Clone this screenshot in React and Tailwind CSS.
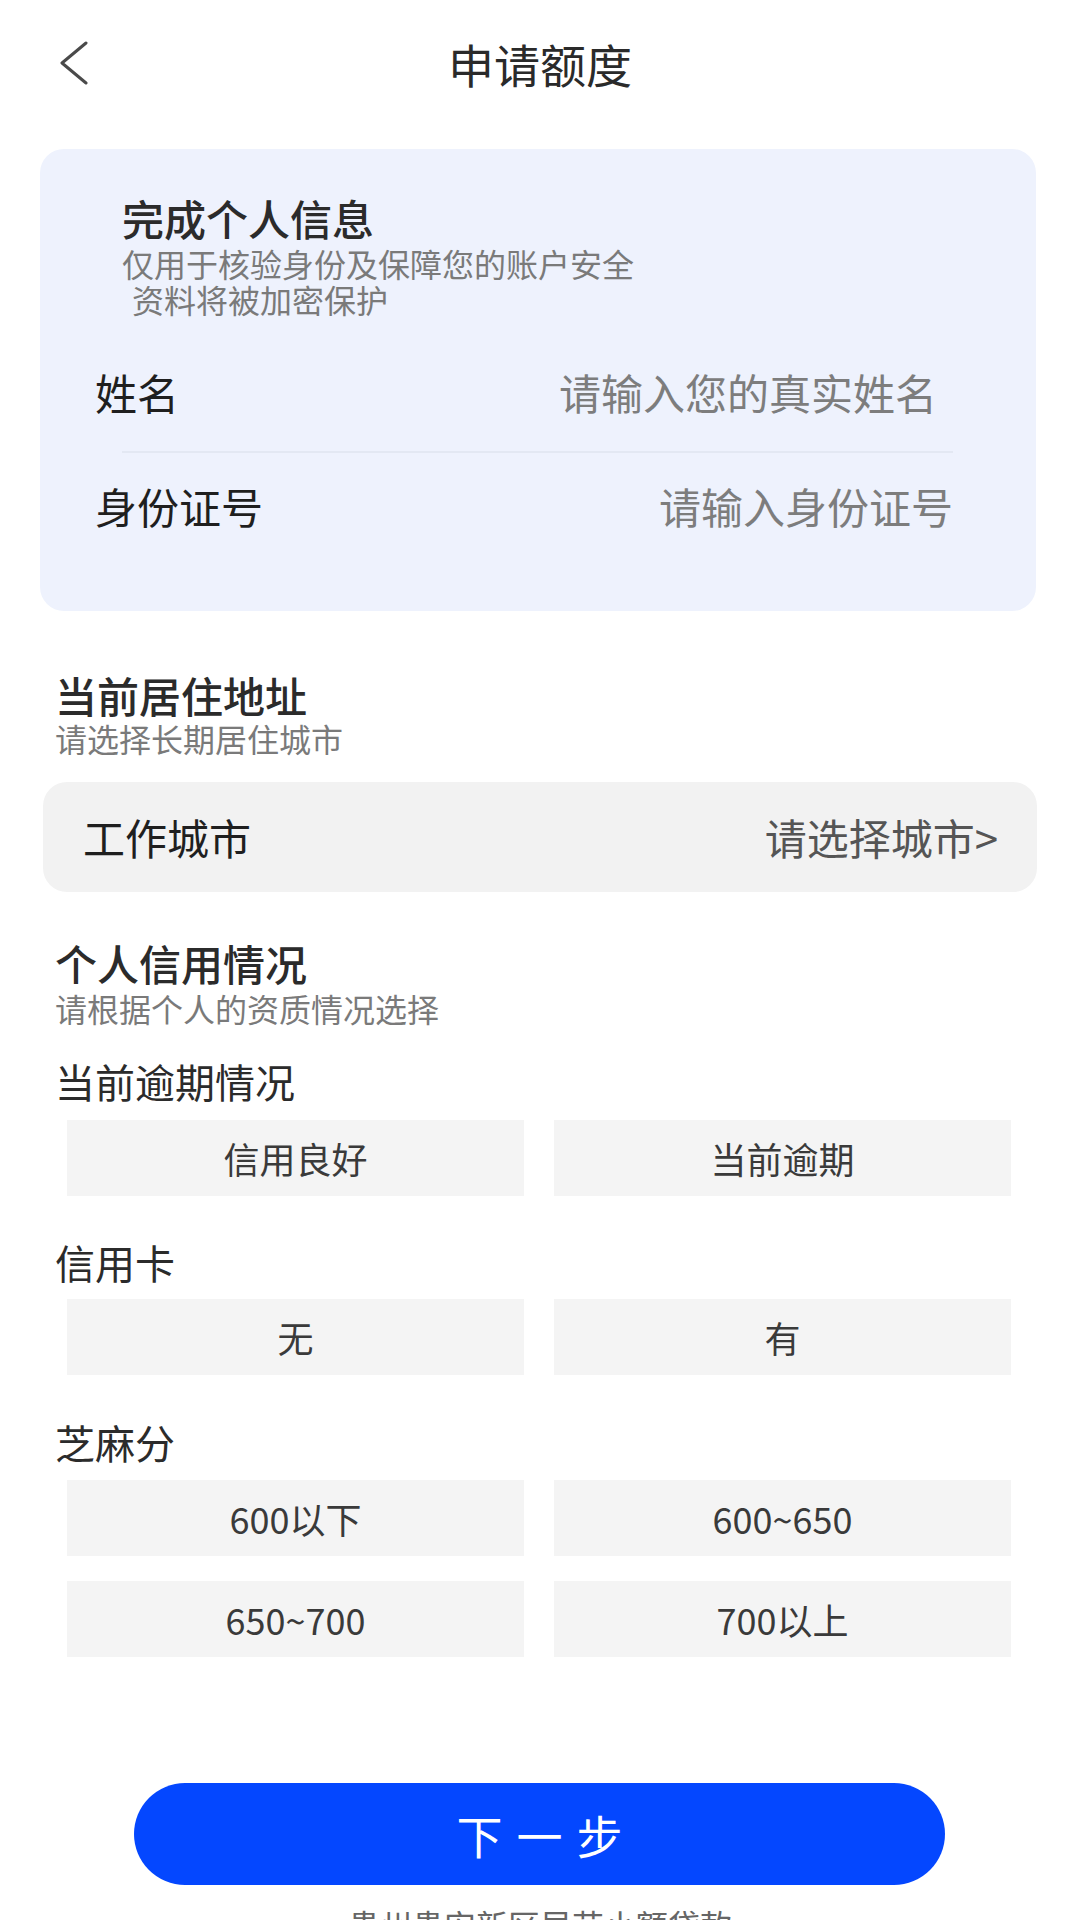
import React from "react";

const font = { fontFamily: '"Noto Sans CJK SC", "Noto Sans", sans-serif' };

function Opt({ children }) {
  return (
    <div className="h-[76px] bg-[#f4f4f4] flex items-center justify-center text-[36px] text-[#3a3a3a] leading-none">
      {children}
    </div>
  );
}

export default function App() {
  return (
    <div
      className="w-[1080px] h-[1920px] overflow-hidden bg-white flex flex-col"
      style={font}
    >
      {/* header */}
      <div className="h-[126px] flex items-center px-[59px] shrink-0">
        <svg width="30" height="44" viewBox="0 0 30 44" fill="none">
          <polyline
            points="27,2 3,22 27,42"
            stroke="#4a4a4a"
            strokeWidth="3"
            strokeLinecap="round"
            strokeLinejoin="round"
          />
        </svg>
        <div className="flex-1 text-center text-[46px] leading-none text-[#2a2a2a]">
          申请额度
        </div>
        <div className="w-[30px]" />
      </div>

      {/* info card */}
      <div className="mt-[23px] ml-[40px] w-[996px] h-[462px] rounded-[24px] bg-[#eef2fd] pt-[42px] shrink-0 flex flex-col">
        <div className="px-[82px]">
          <div className="text-[42px] leading-[54px] font-medium text-[#2b2b2b]">
            完成个人信息
          </div>
          <div className="text-[32px] leading-[36px] text-[#7a7a7a]">
            仅用于核验身份及保障您的账户安全
          </div>
          <div className="text-[32px] leading-[36px] text-[#7a7a7a] pl-[10px]">
            资料将被加密保护
          </div>
        </div>
        <div className="mt-[33px] h-[84px] flex items-center justify-between pl-[55px] pr-[99px] text-[42px] leading-none">
          <span className="text-[#1f1f1f]">姓名</span>
          <span className="text-[#7d7d7d]">请输入您的真实姓名</span>
        </div>
        <div className="mt-[17px] ml-[82px] mr-[83px] h-[2px] bg-[#e3e8f3]" />
        <div className="mt-[11px] h-[84px] flex items-center justify-between pl-[55px] pr-[83px] text-[42px] leading-none">
          <span className="text-[#1f1f1f]">身份证号</span>
          <span className="text-[#7d7d7d]">请输入身份证号</span>
        </div>
      </div>

      {/* address */}
      <div className="mt-[59px] px-[55px]">
        <div className="text-[42px] leading-[50px] font-medium text-[#2b2b2b]">
          当前居住地址
        </div>
        <div className="text-[32px] leading-[36px] text-[#7a7a7a]">
          请选择长期居住城市
        </div>
      </div>
      <div className="mt-[26px] ml-[43px] w-[994px] h-[110px] rounded-[24px] bg-[#f2f2f2] flex items-center justify-between pl-[40px] pr-[39px] text-[42px] leading-none shrink-0">
        <span className="text-[#1f1f1f]">工作城市</span>
        <span className="text-[#555555]">请选择城市&gt;</span>
      </div>

      {/* credit */}
      <div className="mt-[46px] px-[55px]">
        <div className="text-[42px] leading-[50px] font-medium text-[#2b2b2b]">
          个人信用情况
        </div>
        <div className="mt-[2px] text-[32px] leading-[36px] text-[#7a7a7a]">
          请根据个人的资质情况选择
        </div>
        <div className="mt-[30px] text-[40px] leading-[50px] text-[#2b2b2b]">
          当前逾期情况
        </div>
      </div>
      <div className="mt-[14px] pl-[67px] pr-[69px] grid grid-cols-2 gap-x-[30px]">
        <Opt>信用良好</Opt>
        <Opt>当前逾期</Opt>
      </div>

      <div className="mt-[41px] px-[55px] text-[40px] leading-[50px] text-[#2b2b2b]">
        信用卡
      </div>
      <div className="mt-[12px] pl-[67px] pr-[69px] grid grid-cols-2 gap-x-[30px]">
        <Opt>无</Opt>
        <Opt>有</Opt>
      </div>

      <div className="mt-[42px] px-[55px] text-[40px] leading-[50px] text-[#2b2b2b]">
        芝麻分
      </div>
      <div className="mt-[13px] pl-[67px] pr-[69px] grid grid-cols-2 gap-x-[30px] gap-y-[25px]">
        <Opt>600以下</Opt>
        <Opt>600~650</Opt>
        <Opt>650~700</Opt>
        <Opt>700以上</Opt>
      </div>

      {/* next */}
      <div className="mt-[126px] ml-[134px] w-[811px] h-[102px] rounded-full bg-[#0447ff] flex items-center justify-center shrink-0">
        <span className="text-[46px] leading-none text-white tracking-[14px] pl-[14px]">
          下一步
        </span>
      </div>
      <div className="mt-[21px] text-center text-[32px] leading-[36px] text-[#666666] shrink-0">
        贵州贵安新区早花小额贷款
      </div>
    </div>
  );
}
